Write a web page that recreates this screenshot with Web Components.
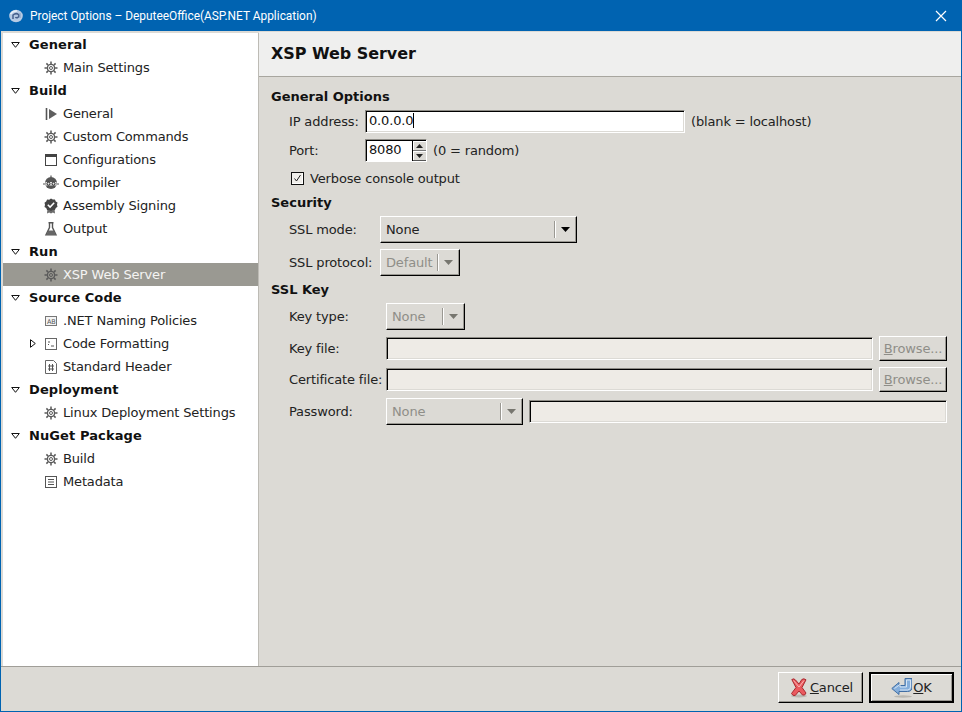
<!DOCTYPE html>
<html>
<head>
<meta charset="utf-8">
<title>Project Options</title>
<style>
html,body{margin:0;padding:0;background:#dcdad5;}
body{font:13px "DejaVu Sans",sans-serif;color:#1a1a1a;letter-spacing:-.15px;}
</style>
</head>
<body>
<options-window>
  <span slot="title">Project Options – DeputeeOffice(ASP.NET Application)</span>

  <tree-head slot="tree">General</tree-head>
  <tree-item slot="tree" icon="gear">Main Settings</tree-item>
  <tree-head slot="tree">Build</tree-head>
  <tree-item slot="tree" icon="play">General</tree-item>
  <tree-item slot="tree" icon="gear">Custom Commands</tree-item>
  <tree-item slot="tree" icon="window">Configurations</tree-item>
  <tree-item slot="tree" icon="robot">Compiler</tree-item>
  <tree-item slot="tree" icon="badge">Assembly Signing</tree-item>
  <tree-item slot="tree" icon="flask">Output</tree-item>
  <tree-head slot="tree">Run</tree-head>
  <tree-item slot="tree" icon="gear" selected>XSP Web Server</tree-item>
  <tree-head slot="tree">Source Code</tree-head>
  <tree-item slot="tree" icon="ab">.NET Naming Policies</tree-item>
  <tree-item slot="tree" icon="format" expander>Code Formatting</tree-item>
  <tree-item slot="tree" icon="hash">Standard Header</tree-item>
  <tree-head slot="tree">Deployment</tree-head>
  <tree-item slot="tree" icon="gear">Linux Deployment Settings</tree-item>
  <tree-head slot="tree">NuGet Package</tree-head>
  <tree-item slot="tree" icon="gear">Build</tree-item>
  <tree-item slot="tree" icon="lines">Metadata</tree-item>

  <panel-header slot="header">XSP Web Server</panel-header>

  <form-section heading="General Options" style="--label:70px">
    <form-field label="IP address:">
      <gtk-entry focused style="width:320px;padding:0 3px">0.0.0.0</gtk-entry>
      <span>(blank = localhost)</span>
    </form-field>
    <form-field label="Port:">
      <gtk-spin value="8080"></gtk-spin>
      <span>(0 = random)</span>
    </form-field>
    <gtk-check>Verbose console output</gtk-check>
  </form-section>

  <form-section heading="Security" style="--label:85px">
    <form-field label="SSL mode:"><gtk-combo style="width:197px">None</gtk-combo></form-field>
    <form-field label="SSL protocol:"><gtk-combo disabled style="width:80px">Default</gtk-combo></form-field>
  </form-section>

  <form-section heading="SSL Key" style="--label:91px">
    <form-field label="Key type:"><gtk-combo disabled style="width:79px">None</gtk-combo></form-field>
    <form-field label="Key file:">
      <gtk-entry disabled style="flex:1"></gtk-entry>
      <gtk-button disabled style="width:68px"><u>B</u>rowse...</gtk-button>
    </form-field>
    <form-field label="Certificate file:">
      <gtk-entry disabled style="flex:1"></gtk-entry>
      <gtk-button disabled style="width:68px"><u>B</u>rowse...</gtk-button>
    </form-field>
    <form-field label="Password:">
      <gtk-combo disabled style="width:137px">None</gtk-combo>
      <gtk-entry disabled style="flex:1"></gtk-entry>
    </form-field>
  </form-section>

  <gtk-button slot="footer" icon="cancel" style="width:85px;height:31px"><u>C</u>ancel</gtk-button>
  <gtk-button slot="footer" icon="ok" default style="width:85px;height:31px"><u>O</u>K</gtk-button>
</options-window>

<script>
const ICONS={
  gear:`<g fill="none" stroke="#5a5a5a"><circle cx="8" cy="8" r="3.6" stroke-width="1.4"/><circle cx="8" cy="8" r="1.5" stroke-width="1"/><path stroke-width="1.5" d="M8 1.5v2.4M8 12.1v2.4M1.5 8h2.4M12.1 8h2.4M3.4 3.4l1.7 1.7M10.9 10.9l1.7 1.7M12.6 3.4l-1.7 1.7M5.1 10.9l-1.7 1.7"/></g>`,
  play:`<path d="M3.5 2v12" stroke="#555" stroke-width="1.6"/><path d="M6 3l8 5-8 5z" fill="#5f5f5f"/>`,
  window:`<rect x="2.5" y="2.5" width="11" height="11" fill="none" stroke="#444"/><path d="M2 3h12v2H2z" fill="#444"/>`,
  robot:`<circle cx="8" cy="8" r="6" fill="#555"/><path d="M8 .5v2M-.5 9H2M14 9h2.500" stroke="#555" stroke-width="1.200"/><path d="M2.500 7h11v3.500h-11z" fill="#e8e8e8"/><circle cx="5.500" cy="8.700" r="1.500" fill="none" stroke="#222" stroke-width="1"/><circle cx="10.500" cy="8.700" r="1.500" fill="none" stroke="#222" stroke-width="1"/>`,
  badge:`<path d="M4.500 10.500L4 15.500l2.200-1 1.800 1 1.800-1 2.200 1-.5-5z" fill="#6b6b6b"/><path d="M8 .5l1.800 1.100 2.100-.1.900 1.900 1.700 1.200-.5 2.100.5 2.100-1.700 1.200-.9 1.900-2.100-.1L8 13l-1.800-1.100-2.100.1-.9-1.900-1.700-1.200.5-2.100-.5-2.100 1.700-1.200.9-1.900 2.100.1z" fill="#454545"/><path d="M4.800 6.800l2.300 2.300L11.200 4.800" fill="none" stroke="#fff" stroke-width="1.500"/>`,
  flask:`<path d="M5.500 1.800h5M6.500 2v4.500L3 13.800h10L9.500 6.500V2" fill="none" stroke="#555" stroke-width="1.400"/><path d="M5.300 9.500h5.400l2.300 4.500H3z" fill="#666"/>`,
  ab:`<rect x="2.500" y="3.500" width="11" height="9" fill="#f4f4f4" stroke="#777"/><text x="4" y="10.500" font-family="DejaVu Sans" font-size="6.500" fill="#555">AB</text>`,
  format:`<rect x="2.500" y="2.500" width="11" height="11" fill="#fff" stroke="#666"/><path d="M5 6h2M5 8.500h1M8 10h3" stroke="#555"/>`,
  hash:`<path d="M2.500 1.500h8l3 3v10h-11z" fill="#fff" stroke="#666"/><path d="M6.500 5v7M9.500 5v7M5 7h6M5 10h6" stroke="#555"/>`,
  lines:`<rect x="2.500" y="2.500" width="11" height="11" fill="#fff" stroke="#555"/><path d="M5 5.500h6M5 8h6M5 10.500h6" stroke="#555"/>`,
  cancel:`<ellipse cx="11" cy="19" rx="8" ry="1.500" fill="#b9b7b1"/><path d="M3.800 2.500Q6 1 7.500 3L11 7l2.800-4.500q2-1.500 4.200.3L14 10.500l4 5.500q-.8 2.800-3.500 2L11 14l-3.800 4.500Q4.500 19 3.500 16.500l4.500-6z" fill="#ea5a5f" stroke="#a82a30"/><path d="M5.500 3.500L11 10l5-6.500" fill="none" stroke="#f9b4b4"/>`,
  ok:`<ellipse cx="12" cy="19.500" rx="9" ry="1.200" fill="#b9b7b1"/><path d="M.8 11.500L8 5.500v3h6V1.500h7v8.500q0 4.500-4.500 4.500H8v3z" fill="#85aedb" stroke="#3f6da3"/><path d="M3.500 11.500L9 7.500V10h6.500V3H19.500v7q0 3-3 3H9" fill="none" stroke="#d6e5f4"/>`
}

// tiny helper so each element keeps its markup next to its style
function shadow(el,html){
  el.attachShadow({mode:"open"})
  const t=document.createElement('template')
  t.innerHTML=html
  el.shadowRoot.appendChild(t.content.cloneNode(true))
}

class OptionsWindow extends HTMLElement{
  constructor(){
    super()
    shadow(this,`<style>
:host{display:flex;flex-direction:column;width:962px;height:712px;box-sizing:border-box;background:#dcdad5;border:1px solid #0063b1;border-top:0;overflow:hidden;}
.title{flex:none;height:31px;margin:0 -1px;background:#0063b1;color:#fff;display:flex;align-items:center;padding:0 15px 0 8px;font:11.900px Roboto,"Noto Sans",sans-serif;letter-spacing:0;gap:6px;}
.title span{flex:1;}
.main{flex:1;display:flex;min-height:0;padding-left:2px;}
.tree{flex:none;width:255px;margin-top:2px;background:#fff;border-right:1px solid #bdbbb5;}
.right{flex:1;display:flex;flex-direction:column;min-width:0;padding-top:1px;}
.form{padding:11px 14px 0 12px;display:flex;flex-direction:column;gap:5px;}
.foot{flex:none;height:45px;box-sizing:border-box;border-top:1px solid #a09e98;display:flex;justify-content:flex-end;align-items:flex-start;gap:6px;padding:5px 7px 0 0;}
</style>
<div class="title">
<svg width="16" height="16" viewBox="0 0 16 16"><ellipse cx="8" cy="8" rx="6.800" ry="6.200" fill="#b7cbe4"/><path d="M2.500 6Q5 2.500 9 3" fill="none" stroke="#e8f0f8" stroke-width="1.500"/><path d="M5 11V7q3-2.500 5.500-.5 1.200 2-1 3.200-1.500.4-2-.7" fill="none" stroke="#47618d" stroke-width="1.500"/><path d="M12 5v5" stroke="#7f9cc4"/></svg>
<span><slot name="title"></slot></span>
<svg width="12" height="12" viewBox="0 0 12 12"><path d="M1 1l10 10M11 1L1 11" stroke="#fff" stroke-width="1.200"/></svg>
</div>
<div class="main">
<div class="tree"><slot name="tree"></slot></div>
<div class="right"><slot name="header"></slot><div class="form"><slot></slot></div></div>
</div>
<div class="foot"><slot name="footer"></slot></div>`)
  }
}

class TreeHead extends HTMLElement{
  constructor(){
    super()
    shadow(this,`<style>
:host{display:flex;align-items:center;height:23px;font-weight:bold;color:#111;letter-spacing:.1px;}
svg{margin:0 9px 0 8px;flex:none;}
</style>
<svg width="9" height="6" viewBox="0 0 9 6"><path d="M.7.500h7.600L4.500 5.300z" fill="#fff" stroke="#111"/></svg>
<slot></slot>`)
  }
}

class TreeItem extends HTMLElement{
  constructor(){
    super()
    const arrow=this.hasAttribute('expander')?`<svg class="exp" width="6" height="9" viewBox="0 0 6 9"><path d="M.5.700v7.600L5.300 4.500z" fill="#fff" stroke="#111"/></svg>`:''
    shadow(this,`<style>
:host{display:flex;align-items:center;height:23px;padding-left:40px;position:relative;color:#222;}
:host([selected]){background:#9a9992;color:#f4f4f2;}
.icon{margin-right:4px;flex:none;}
.exp{position:absolute;left:27px;top:7px;}
</style>
${arrow}<svg class="icon" width="16" height="16" viewBox="0 0 16 16">${ICONS[this.getAttribute('icon')]}</svg>
<slot></slot>`)
  }
}

class PanelHeader extends HTMLElement{
  constructor(){
    super()
    shadow(this,`<style>
:host{display:flex;align-items:center;flex:none;height:45px;padding:0 0 2px 12px;box-sizing:border-box;background:#efefee;border-bottom:1px solid #a8a69f;font-size:16px;font-weight:bold;letter-spacing:-.05px;color:#111;}
</style><slot></slot>`)
  }
}

class FormSection extends HTMLElement{
  constructor(){
    super()
    shadow(this,`<style>
:host{display:block;}
h3{margin:0 0 5px;font-size:13px;line-height:17px;height:17px;font-weight:bold;letter-spacing:0;color:#111;}
.grid{display:grid;grid-template-columns:var(--label,auto) 1fr;column-gap:6px;row-gap:6px;padding-left:18px;}
</style><h3>${this.getAttribute('heading')}</h3><div class="grid"><slot></slot></div>`)
  }
}

class FormField extends HTMLElement{
  constructor(){
    super()
    shadow(this,`<style>
:host{display:contents;}
.label{display:flex;align-items:center;white-space:nowrap;color:#222;}
.ctl{display:flex;align-items:center;gap:6px;min-width:0;}
::slotted(span){color:#222;white-space:nowrap;}
</style><span class="label">${this.getAttribute('label')}</span><div class="ctl"><slot></slot></div>`)
  }
}

class GtkEntry extends HTMLElement{
  constructor(){
    super()
    shadow(this,`<style>
:host{display:block;box-sizing:border-box;height:23px;line-height:20px;background:#fff;padding:0 2px;color:#111;
border:1px solid;border-color:#8d8b85 #fff #fff #8d8b85;box-shadow:inset 1px 1px 0 #000,inset -1px -1px 0 #dcdad5;}
:host([disabled]){background:#eeebe6;}
.caret{display:inline-block;width:1px;height:15px;background:#000;vertical-align:-3px;}
</style><slot></slot>${this.hasAttribute('focused')?'<span class="caret"></span>':''}`)
  }
}

class GtkSpin extends HTMLElement{
  constructor(){
    super()
    shadow(this,`<style>
:host{display:flex;box-sizing:border-box;width:62px;height:23px;background:#fff;
border:1px solid;border-color:#8d8b85 #fff #fff #8d8b85;box-shadow:inset 1px 1px 0 #000;}
.val{flex:1;padding:0 3px;line-height:20px;color:#111;}
.btns{width:13px;display:flex;flex-direction:column;background:#dcdad5;border-left:1px solid #000;margin-top:1px;}
.btns div{flex:1;display:flex;align-items:center;justify-content:center;}
.btns div:first-child{border-bottom:1px solid #777;box-shadow:inset 1px 1px 0 #fff;}
.btns div:last-child{box-shadow:inset 1px 1px 0 #fff;border-bottom:1px solid #555;}
</style><span class="val">${this.getAttribute('value')}</span>
<div class="btns"><div><svg width="7" height="4"><path d="M3.500 0L7 4H0z" fill="#222"/></svg></div><div><svg width="7" height="4"><path d="M0 0h7L3.500 4z" fill="#222"/></svg></div></div>`)
  }
}

class GtkCheck extends HTMLElement{
  constructor(){
    super()
    shadow(this,`<style>
:host{grid-column:1/-1;display:flex;align-items:center;height:21px;padding-left:2px;color:#222;}
.box{flex:none;width:11px;height:11px;margin-right:6px;border:1px solid #111;box-shadow:inset -1px -1px 0 #fff;background:#f0eeea;display:flex;}
</style><span class="box"><svg width="11" height="11" viewBox="0 0 11 11"><path d="M2.500 5.500l2 2.500 4-6" fill="none" stroke="#222" stroke-width="1"/></svg></span><slot></slot>`)
  }
}

class GtkCombo extends HTMLElement{
  constructor(){
    super()
    shadow(this,`<style>
:host{display:flex;align-items:center;box-sizing:border-box;height:27px;background:#dcdad5;color:#222;
border:1px solid;border-color:#fff #000 #000 #fff;box-shadow:inset -1px -1px 0 #9a9892;flex:none;}
:host([disabled]){color:#8f8e88;}
.txt{flex:1;padding-left:5px;}
.sep{width:1px;height:17px;background:#9a9892;border-right:1px solid #fff;margin-right:5px;}
svg{margin-right:6px;}
</style><span class="txt"><slot></slot></span><span class="sep"></span>
<svg width="9" height="5"><path d="M0 0h9L4.500 5z" fill="${this.hasAttribute('disabled')?'#77766f':'#000'}"/></svg>`)
  }
}

class GtkButton extends HTMLElement{
  constructor(){
    super()
    const icon=this.getAttribute('icon')
    shadow(this,`<style>
:host{display:flex;align-items:center;justify-content:center;box-sizing:border-box;height:25px;background:#dcdad5;color:#222;flex:none;
border:1px solid;border-color:#fff #000 #000 #fff;box-shadow:inset -1px -1px 0 #9a9892;}
:host([disabled]){color:#8f8e88;}
:host([default]){border:2px solid #000;box-shadow:inset 1px 1px 0 #fff,inset -1px -1px 0 #9a9892;}
svg{margin-right:1px;flex:none;}
</style>${icon?`<svg width="21" height="21" viewBox="0 0 21 21">${ICONS[icon]}</svg>`:''}<span><slot></slot></span>`)
  }
}

customElements.define('options-window',OptionsWindow)
customElements.define('tree-head',TreeHead)
customElements.define('tree-item',TreeItem)
customElements.define('panel-header',PanelHeader)
customElements.define('form-section',FormSection)
customElements.define('form-field',FormField)
customElements.define('gtk-entry',GtkEntry)
customElements.define('gtk-spin',GtkSpin)
customElements.define('gtk-check',GtkCheck)
customElements.define('gtk-combo',GtkCombo)
customElements.define('gtk-button',GtkButton)
</script>
</body>
</html>
